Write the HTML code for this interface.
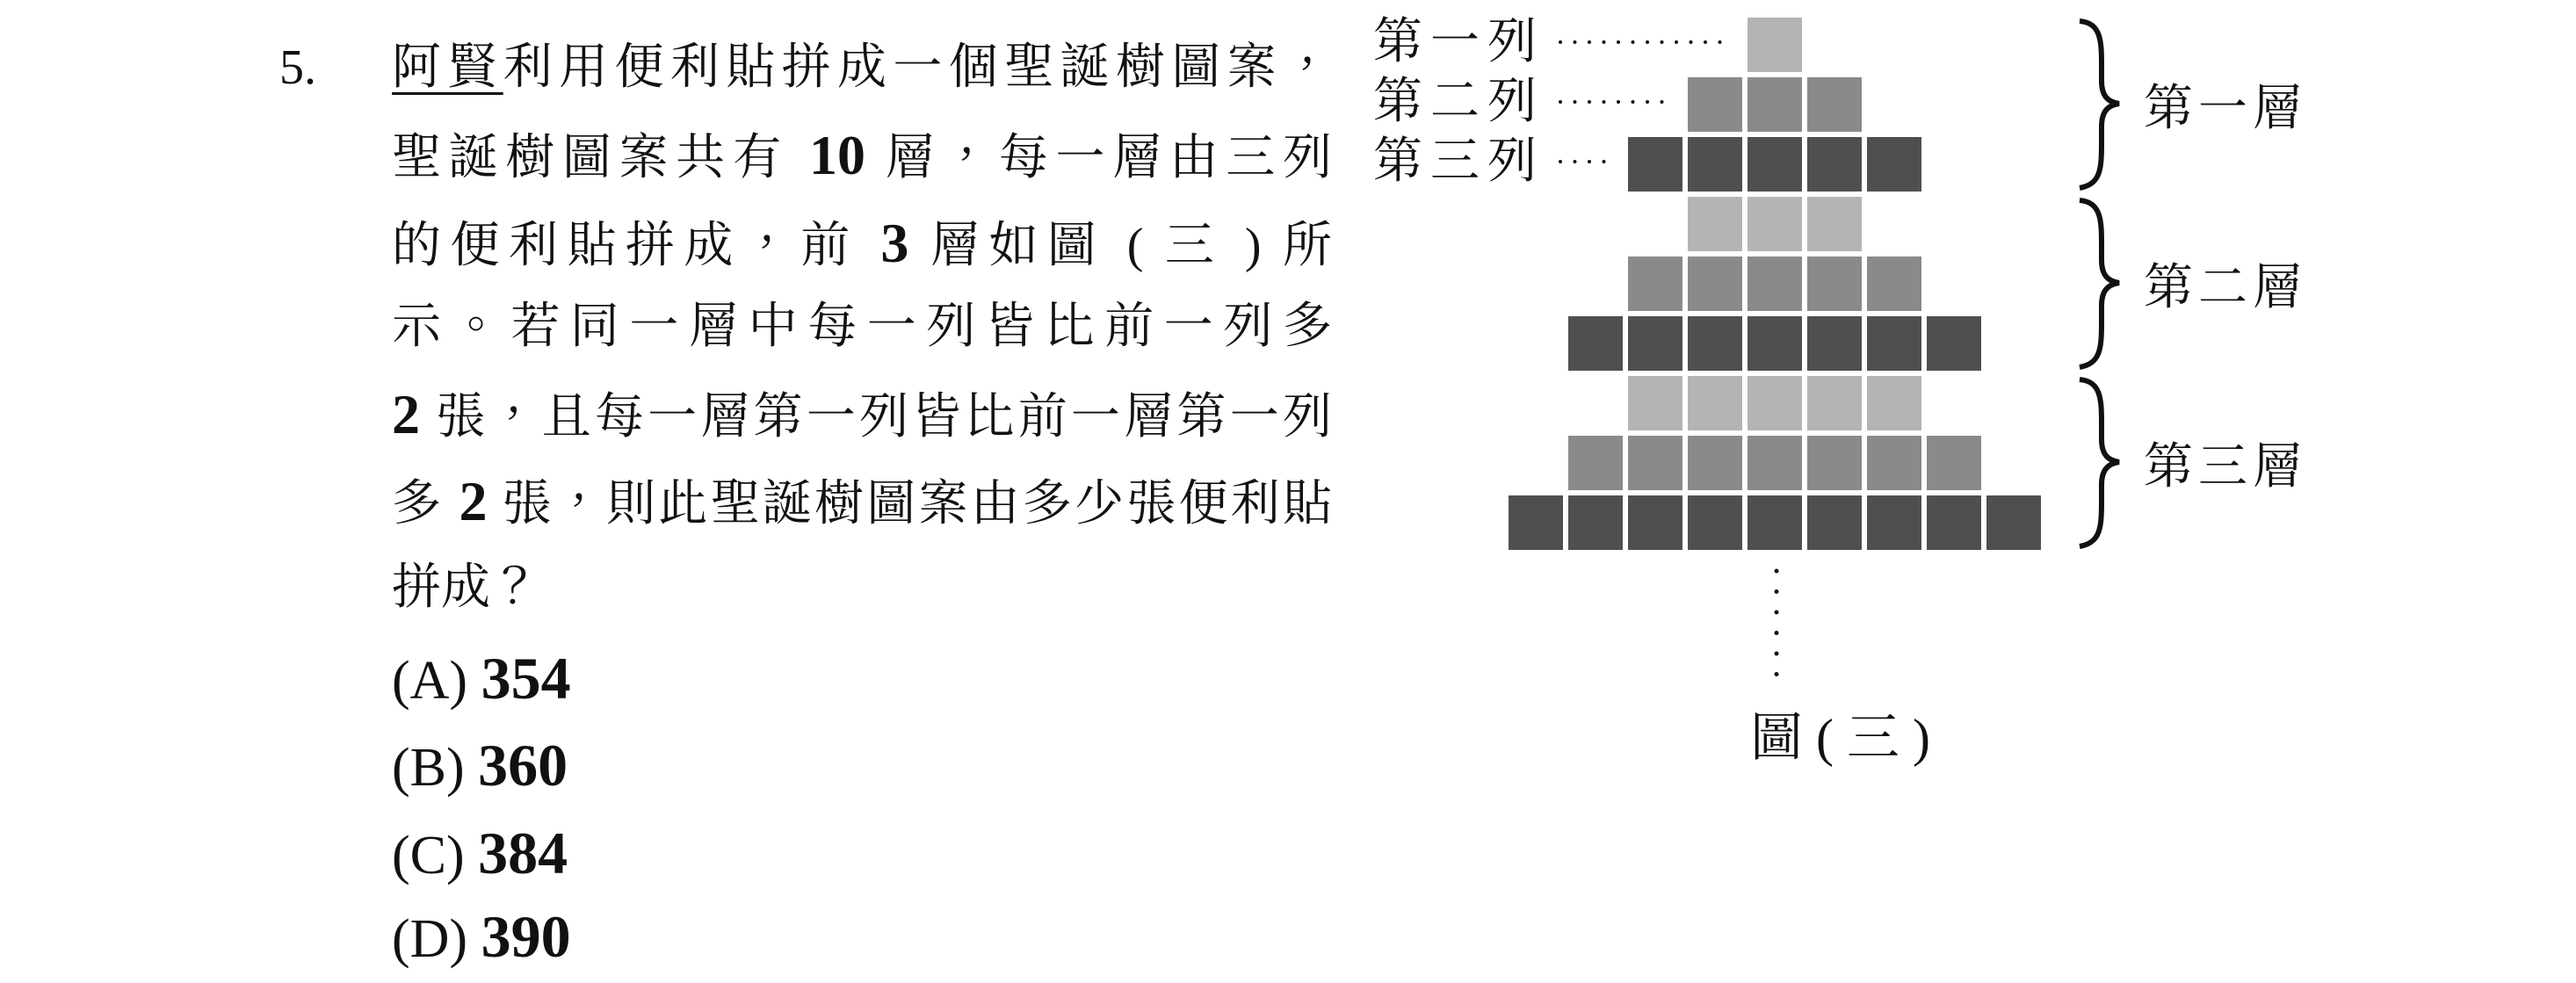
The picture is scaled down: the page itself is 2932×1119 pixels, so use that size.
<!DOCTYPE html>
<html><head><meta charset="utf-8">
<style>
html,body{margin:0;padding:0;background:#fff;}
body{width:2932px;height:1104px;position:relative;overflow:hidden;font-family:"Liberation Serif","Noto Serif CJK TC","Noto Serif CJK SC",serif;color:#111;}
.l{position:absolute;left:446px;width:1070px;height:99px;line-height:99px;font-size:56px;text-align:justify;text-align-last:justify;white-space:nowrap;}
.o{position:absolute;left:446px;height:99px;line-height:99px;font-size:62px;white-space:nowrap;}
b{font-family:"Liberation Serif",serif;font-weight:bold;font-size:64px;}
.o b{font-size:68px;}
.n{position:absolute;left:318px;top:28px;line-height:99px;font-size:56px;}
.t{position:absolute;font-size:56px;white-space:nowrap;line-height:68px;}
</style></head><body>
<div class="n">5.</div>
<div class="l" style="top:28px"><span style="text-decoration:underline;text-underline-offset:10px;text-decoration-thickness:3px">阿賢</span>利用便利貼拼成一個聖誕樹圖案，</div>
<div class="l" style="top:127px">聖誕樹圖案共有 <b>10</b> 層，每一層由三列</div>
<div class="l" style="top:227px">的便利貼拼成，前 <b>3</b> 層如圖 ( 三 ) 所</div>
<div class="l" style="top:323px">示。若同一層中每一列皆比前一列多</div>
<div class="l" style="top:422px"><b>2</b> 張，且每一層第一列皆比前一層第一列</div>
<div class="l" style="top:521px">多 <b>2</b> 張，則此聖誕樹圖案由多少張便利貼</div>
<div class="l" style="top:620px;width:auto;text-align-last:auto">拼成？</div>
<div class="o" style="top:723px">(A) <b>354</b></div>
<div class="o" style="top:822px">(B) <b>360</b></div>
<div class="o" style="top:922px">(C) <b>384</b></div>
<div class="o" style="top:1017px">(D) <b>390</b></div>

<svg style="position:absolute;left:0;top:0" width="2932" height="1104" xmlns="http://www.w3.org/2000/svg">
<g transform="translate(-3,-2)">
<g fill="#b4b4b4">
<rect x="1992" y="22" width="62" height="62"/>
<rect x="1924" y="226" width="62" height="62"/><rect x="1992" y="226" width="62" height="62"/><rect x="2060" y="226" width="62" height="62"/>
<rect x="1856" y="430" width="62" height="62"/><rect x="1924" y="430" width="62" height="62"/><rect x="1992" y="430" width="62" height="62"/><rect x="2060" y="430" width="62" height="62"/><rect x="2128" y="430" width="62" height="62"/>
</g>
<g fill="#8a8a8a">
<rect x="1924" y="90" width="62" height="62"/><rect x="1992" y="90" width="62" height="62"/><rect x="2060" y="90" width="62" height="62"/>
<rect x="1856" y="294" width="62" height="62"/><rect x="1924" y="294" width="62" height="62"/><rect x="1992" y="294" width="62" height="62"/><rect x="2060" y="294" width="62" height="62"/><rect x="2128" y="294" width="62" height="62"/>
<rect x="1788" y="498" width="62" height="62"/><rect x="1856" y="498" width="62" height="62"/><rect x="1924" y="498" width="62" height="62"/><rect x="1992" y="498" width="62" height="62"/><rect x="2060" y="498" width="62" height="62"/><rect x="2128" y="498" width="62" height="62"/><rect x="2196" y="498" width="62" height="62"/>
</g>
<g fill="#4f4f4f">
<rect x="1856" y="158" width="62" height="62"/><rect x="1924" y="158" width="62" height="62"/><rect x="1992" y="158" width="62" height="62"/><rect x="2060" y="158" width="62" height="62"/><rect x="2128" y="158" width="62" height="62"/>
<rect x="1788" y="362" width="62" height="62"/><rect x="1856" y="362" width="62" height="62"/><rect x="1924" y="362" width="62" height="62"/><rect x="1992" y="362" width="62" height="62"/><rect x="2060" y="362" width="62" height="62"/><rect x="2128" y="362" width="62" height="62"/><rect x="2196" y="362" width="62" height="62"/>
<rect x="1720" y="566" width="62" height="62"/><rect x="1788" y="566" width="62" height="62"/><rect x="1856" y="566" width="62" height="62"/><rect x="1924" y="566" width="62" height="62"/><rect x="1992" y="566" width="62" height="62"/><rect x="2060" y="566" width="62" height="62"/><rect x="2128" y="566" width="62" height="62"/><rect x="2196" y="566" width="62" height="62"/><rect x="2264" y="566" width="62" height="62"/>
</g>
<g stroke="#111" stroke-width="4" stroke-linecap="round" stroke-dasharray="0 16.5">
<line x1="1779" y1="50" x2="1962" y2="50"/>
<line x1="1779" y1="118" x2="1896" y2="118"/>
<line x1="1779" y1="186" x2="1831" y2="186"/>
<line x1="2025" y1="652" x2="2025" y2="770" stroke-dasharray="0 23.5" stroke-width="5"/>
</g>
</g>
<g fill="none" stroke="#111" stroke-width="6">
<path id="br" d="M2367,24 C2390,26 2392,44 2392,72 L2392,92 C2392,108 2398,116 2412,118 C2398,120 2392,128 2392,144 L2392,164 C2392,194 2390,210 2367,214"/>
<use href="#br" y="204"/>
<use href="#br" y="408"/>
</g>
</svg>
<div class="t" style="left:1563px;top:14px;letter-spacing:9px">第一列</div>
<div class="t" style="left:1563px;top:82px;letter-spacing:9px">第二列</div>
<div class="t" style="left:1563px;top:150px;letter-spacing:9px">第三列</div>
<div class="t" style="left:2440px;top:90px;letter-spacing:6px">第一層</div>
<div class="t" style="left:2440px;top:294px;letter-spacing:6px">第二層</div>
<div class="t" style="left:2440px;top:498px;letter-spacing:6px">第三層</div>
<div class="t" style="left:1992px;top:806px;font-size:60px;letter-spacing:0px">圖 ( 三 )</div>
</body></html>
